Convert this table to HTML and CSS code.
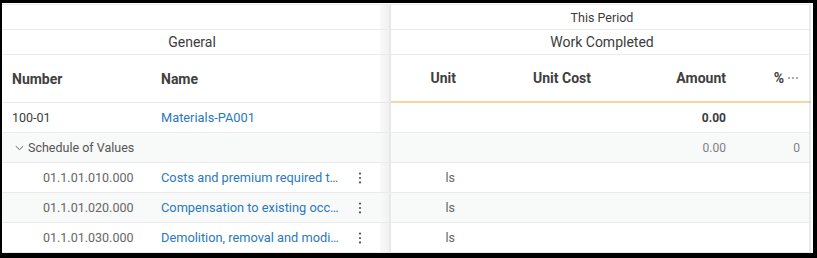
FILE: index.html
```html
<!DOCTYPE html>
<html>
<head>
<meta charset="utf-8">
<link rel="stylesheet" href="styles.css">
</head>
<body>
<div class="frame">
  <div class="grid">
    <!-- row 1 -->
    <div class="cell group-empty span-left"></div>
    <div class="cell split"></div>
    <div class="cell group small span-right">This Period</div>
    <div class="cell bar"></div>

    <!-- row 2 -->
    <div class="cell group span-left">General</div>
    <div class="cell split"></div>
    <div class="cell group span-right">Work Completed</div>
    <div class="cell bar"></div>

    <!-- header row -->
    <div class="cell head pad-num">Number</div>
    <div class="cell head pad-name">Name</div>
    <div class="cell split split-head"></div>
    <div class="cell head right hl">Unit</div>
    <div class="cell head right hl">Unit Cost</div>
    <div class="cell head right hl">Amount</div>
    <div class="cell head right hl pct-head">%<svg class="more" width="12" height="4" viewBox="0 0 12 4"><circle cx="2" cy="2" r="1.1"/><circle cx="6" cy="2" r="1.1"/><circle cx="10" cy="2" r="1.1"/></svg></div>
    <div class="cell bar bar-head"></div>

    <!-- row 100-01 -->
    <div class="cell pad-num dark">100-01</div>
    <div class="cell pad-name"><span class="link">Materials-PA001</span></div>
    <div class="cell split"></div>
    <div class="cell right"></div>
    <div class="cell right"></div>
    <div class="cell right strong">0.00</div>
    <div class="cell right pct"></div>
    <div class="cell bar"></div>

    <!-- SOV row -->
    <div class="cell sov span-left alt"><svg class="chev" width="9" height="6" viewBox="0 0 9 6"><path d="M0.8 1.2 L4.5 4.6 L8.2 1.2"/></svg>Schedule of Values</div>
    <div class="cell split"></div>
    <div class="cell right alt"></div>
    <div class="cell right alt"></div>
    <div class="cell right alt muted">0.00</div>
    <div class="cell right pct alt muted">0</div>
    <div class="cell bar"></div>

    <!-- item rows -->
    <div class="cell sub">01.1.01.010.000</div>
    <div class="cell pad-name namecell"><span class="link ell">Costs and premium required to maintain the existing facility</span><svg class="kebab" width="16" height="16" viewBox="0 0 16 16"><circle cx="8" cy="3.6" r="1.1"/><circle cx="8" cy="8" r="1.1"/><circle cx="8" cy="12.4" r="1.1"/></svg></div>
    <div class="cell split"></div>
    <div class="cell right unit">ls</div>
    <div class="cell right"></div>
    <div class="cell right"></div>
    <div class="cell right pct"></div>
    <div class="cell bar"></div>

    <div class="cell sub alt">01.1.01.020.000</div>
    <div class="cell pad-name namecell alt"><span class="link ell">Compensation to existing occupants for relocation</span><svg class="kebab" width="16" height="16" viewBox="0 0 16 16"><circle cx="8" cy="3.6" r="1.1"/><circle cx="8" cy="8" r="1.1"/><circle cx="8" cy="12.4" r="1.1"/></svg></div>
    <div class="cell split"></div>
    <div class="cell right unit alt">ls</div>
    <div class="cell right alt"></div>
    <div class="cell right alt"></div>
    <div class="cell right pct alt"></div>
    <div class="cell bar"></div>

    <div class="cell sub">01.1.01.030.000</div>
    <div class="cell pad-name namecell"><span class="link ell">Demolition, removal and modification of existing work</span><svg class="kebab" width="16" height="16" viewBox="0 0 16 16"><circle cx="8" cy="3.6" r="1.1"/><circle cx="8" cy="8" r="1.1"/><circle cx="8" cy="12.4" r="1.1"/></svg></div>
    <div class="cell split"></div>
    <div class="cell right unit">ls</div>
    <div class="cell right"></div>
    <div class="cell right"></div>
    <div class="cell right pct"></div>
    <div class="cell bar"></div>
  </div>
</div>
</body>
</html>
```

FILE: styles.css
```css
* { box-sizing: border-box; }

html, body {
  margin: 0;
  padding: 0;
  background: #000;
}

body {
  width: 817px;
  height: 258px;
  overflow: hidden;
  font-family: Roboto, "Noto Sans", sans-serif;
  font-size: 12px;
  color: #3c3c3c;
}

.frame {
  margin: 3px 4px 0 2px;
  width: 811px;
  height: 250px;
  background: #fff;
  padding-top: 1px;
  overflow: hidden;
}

.grid {
  display: grid;
  grid-template-columns: 147px 231px 11px 77px 135px 135px 71px 2px;
  grid-template-rows: 25px 25px 48px 30px 30px 30px 30px 30px;
  border-top: 1px solid #ebebeb;
  width: 809px;
}

.cell {
  border-bottom: 1px solid #ebebeb;
  display: flex;
  align-items: center;
  min-width: 0;
  white-space: nowrap;
}

.span-left { grid-column: 1 / 3; }
.span-right { grid-column: 4 / 8; }

.group {
  justify-content: center;
  font-size: 14px;
  color: #3c3c3c;
}
.group.small { font-size: 12.5px; }
.group.span-left { padding-left: 2px; }
.group.span-right { padding-left: 4px; }

.split {
  background: linear-gradient(to right, #f9f9f9, #f1f1f1);
  border-right: 2px solid #e8e8e8;
}
.split-head { border-bottom: 1px solid #dfe7f1; }

.bar { background: #ebebeb; border-bottom-color: #ebebeb; }
.bar-head { border-bottom: 2px solid #a8dde0; }

.head {
  font-size: 14px;
  font-weight: 700;
  color: #404040;
}
.hl { border-bottom: 2px solid #f7d59d; }

.right { justify-content: flex-end; padding-right: 12px; }
.pct { padding-right: 9px; }
.pct-head { padding-right: 10px; }

.more { margin-left: 3px; fill: #9a9a9a; }

.pad-num { padding-left: 10px; }
.pad-name { padding-left: 12px; }

.dark { color: #3c3c3c; font-size: 12.5px; }

.link { color: #2a79bd; font-size: 12.8px; }

.strong { font-weight: 700; color: #3c3c3c; }
.muted { color: #808080; }

.alt { background: #f8f9f9; }

.sov {
  padding-left: 13px;
  color: #555;
  font-size: 12.5px;
}
.chev {
  fill: none;
  stroke: #666;
  stroke-width: 1;
  margin-right: 4px;
  margin-top: 1px;
}

.sub {
  padding-left: 41px;
  color: #666;
  font-size: 12.5px;
}

.namecell { padding-right: 12px; }
.ell {
  flex: 1;
  min-width: 0;
  overflow: hidden;
  text-overflow: ellipsis;
  margin-right: 11px;
}
.kebab { flex: none; fill: #555; }

.unit { color: #666; padding-right: 13px; font-size: 12.5px; }
```
